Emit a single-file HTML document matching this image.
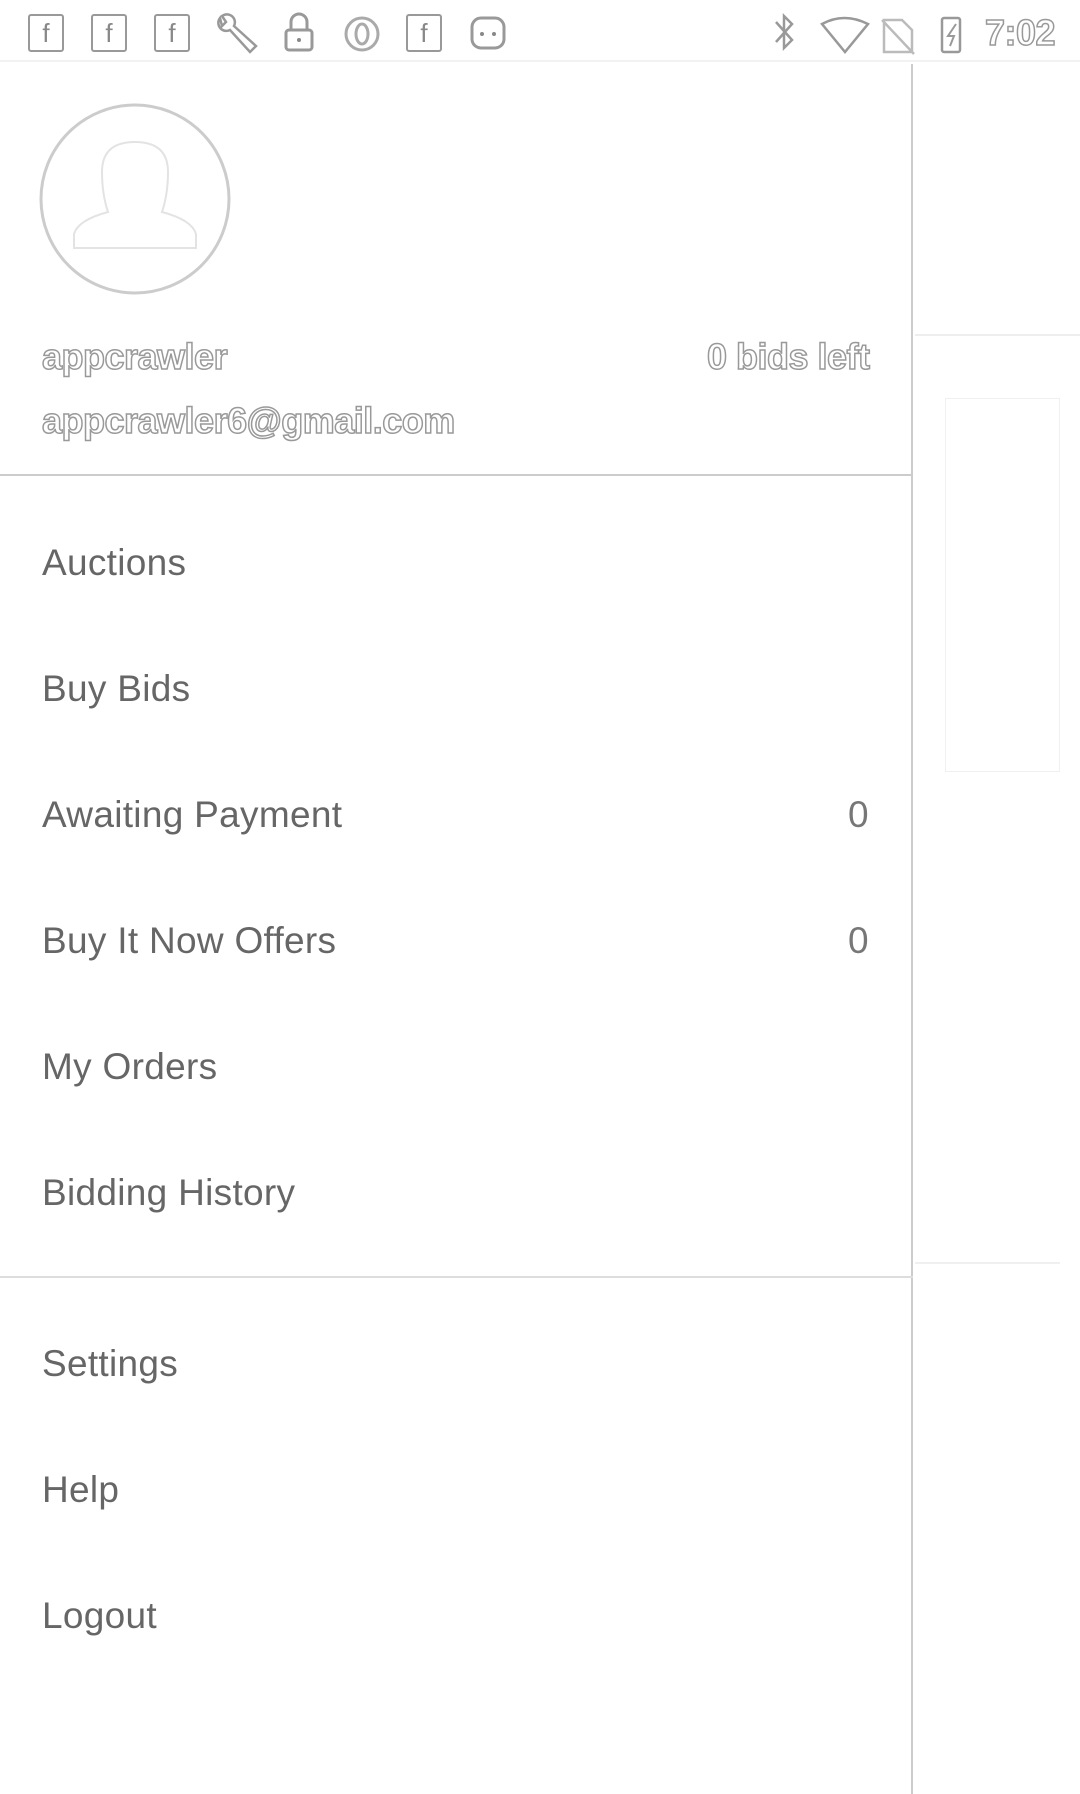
<!DOCTYPE html>
<html><head><meta charset="utf-8"><style>
*{margin:0;padding:0;box-sizing:border-box}
body{width:1080px;height:1794px;background:#fff;position:relative;overflow:hidden;font-family:"Liberation Sans",sans-serif}
.sb{position:absolute;top:0;left:0;width:1080px;height:62px;border-bottom:2px solid #f2f2f2}
.ic{position:absolute;top:14px;width:36px;height:38px;border:2px solid #999;border-radius:3px;color:#888;font-size:26px;text-align:center;line-height:34px}
.drawer{position:absolute;top:64px;left:0;width:913px;height:1730px;border-right:2px solid #ccc;background:#fff}
.hd{position:absolute;color:#fff;-webkit-text-stroke:1.5px #999;font-size:36px;font-weight:bold;letter-spacing:-0.5px}
.it{position:absolute;left:42px;font-size:37px;color:#666;transform:translateY(-50%);letter-spacing:0.3px}
.ct{position:absolute;left:848px;font-size:37px;color:#777;transform:translateY(-50%)}
.ln{position:absolute;left:0;width:913px;height:2px;background:#ccc}
</style></head><body>
<div class="sb">
<div class="ic" style="left:28px">f</div>
<div class="ic" style="left:91px">f</div>
<div class="ic" style="left:154px">f</div>
<svg style="position:absolute;left:212px;top:12px" width="50" height="44" viewBox="0 0 50 44"><path d="M8 6 a8 8 0 0 0 10 12 L38 40 l6-6 L22 14 A8 8 0 0 0 10 4 l4 6 -4 4z" fill="none" stroke="#999" stroke-width="2.5"/></svg>
<svg style="position:absolute;left:282px;top:10px" width="34" height="44" viewBox="0 0 34 44"><path d="M9 20 V12 a8 8 0 0 1 16 0 V20" fill="none" stroke="#999" stroke-width="3"/><rect x="4" y="20" width="26" height="20" rx="3" fill="none" stroke="#999" stroke-width="3"/><circle cx="17" cy="30" r="2" fill="#888"/></svg>
<svg style="position:absolute;left:342px;top:14px" width="40" height="40"><circle cx="20" cy="20" r="16" fill="none" stroke="#aaa" stroke-width="3"/><ellipse cx="20" cy="20" rx="6" ry="10" fill="none" stroke="#aaa" stroke-width="3"/></svg>
<div class="ic" style="left:406px">f</div>
<svg style="position:absolute;left:468px;top:8px" width="40" height="44"><rect x="4" y="10" width="32" height="30" rx="9" fill="none" stroke="#999" stroke-width="3"/><circle cx="14" cy="26" r="2" fill="#888"/><circle cx="26" cy="26" r="2" fill="#888"/></svg>
<svg style="position:absolute;left:772px;top:12px" width="260" height="44"><path d="M4 10 L20 28 L12 36 V4 L20 12 L4 30" fill="none" stroke="#999" stroke-width="2.5"/><path d="M50 12 Q72 0 96 12 L73 40z" fill="none" stroke="#999" stroke-width="2.5"/><path d="M112 8 h18 l10 10 v22 h-28z M110 8 L142 42" fill="none" stroke="#bbb" stroke-width="2.5"/><rect x="170" y="6" width="18" height="34" rx="2" fill="none" stroke="#999" stroke-width="2.5"/><path d="M184 12 l-8 12 h6 l-4 10" fill="none" stroke="#999" stroke-width="2"/></svg>
<div class="hd" style="left:985px;top:12px;font-size:36px">7:02</div>
</div>
<div class="drawer">
<svg style="position:absolute;left:38px;top:38px" width="194" height="194"><circle cx="97" cy="97" r="94" fill="none" stroke="#ccc" stroke-width="3"/><path d="M36 146 V132 Q40 118 70 110 Q64 92 64 70 Q64 40 97 40 Q130 40 130 70 Q130 92 124 110 Q154 118 158 132 V146z" fill="none" stroke="#e3e3e3" stroke-width="2"/></svg>
<div class="hd" style="left:42px;top:272px">appcrawler</div>
<div class="hd" style="left:707px;top:272px">0 bids left</div>
<div class="hd" style="left:42px;top:336px">appcrawler6@gmail.com</div>
</div>
<div class="ln" style="top:474px"></div>
<div class="it" style="top:563px">Auctions</div>
<div class="it" style="top:689px">Buy Bids</div>
<div class="it" style="top:815px">Awaiting Payment</div><div class="ct" style="top:815px">0</div>
<div class="it" style="top:941px">Buy It Now Offers</div><div class="ct" style="top:941px">0</div>
<div class="it" style="top:1067px">My Orders</div>
<div class="it" style="top:1193px">Bidding History</div>
<div class="ln" style="top:1276px;background:#ddd"></div>
<div class="it" style="top:1364px">Settings</div>
<div class="it" style="top:1490px">Help</div>
<div class="it" style="top:1616px">Logout</div>
<div style="position:absolute;left:915px;top:334px;width:165px;height:2px;background:#eee"></div>
<div style="position:absolute;left:945px;top:398px;width:115px;height:374px;border:1px solid #f0f0f0"></div>
<div style="position:absolute;left:915px;top:1262px;width:145px;height:2px;background:#f0f0f0"></div>
</body></html>
